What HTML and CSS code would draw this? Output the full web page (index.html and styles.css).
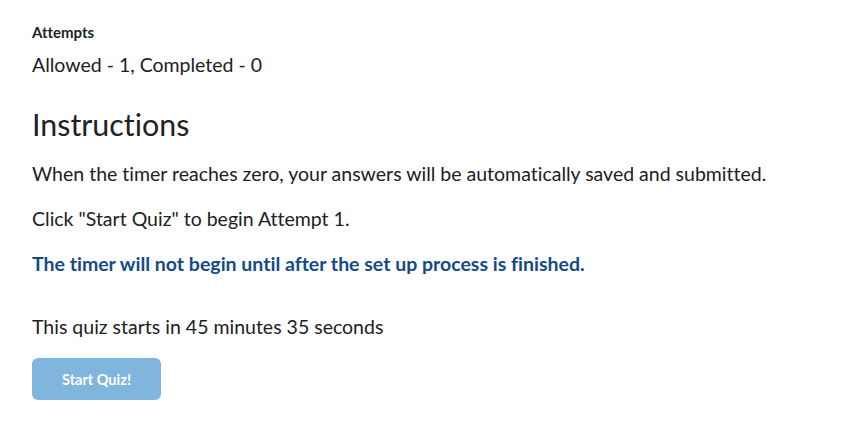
FILE: index.html
```html
<!DOCTYPE html>
<html>
<head>
<meta charset="utf-8"/>
<title>Quiz Summary</title>
<link rel="stylesheet" href="styles.css">
</head>
<body>
<div class="summary">
  <div class="field">
    <div class="label">Attempts</div>
    <div class="value">Allowed - 1, Completed - 0</div>
  </div>

  <h2 class="heading">Instructions</h2>
  <p>When the timer reaches zero, your answers will be automatically saved and submitted.</p>
  <p>Click "Start Quiz" to begin Attempt 1.</p>
  <p class="notice">The timer will not begin until after the set up process is finished.</p>

  <p class="countdown">This quiz starts in 45 minutes 35 seconds</p>
  <button class="btn-primary" disabled>Start Quiz!</button>
</div>
</body>
</html>
```

FILE: styles.css
```css
body {
   font-family: Lato, "Open Sans", sans-serif;
   font-variant-ligatures: none;
   background-color: white;
   color: #202122;
   margin: 0;
}

.summary {
   padding: 22px 32px;
}

.label {
   font-size: 15px;
   font-weight: bold;
   line-height: 20px;
}

.value {
   font-size: 19.5px;
   line-height: 28px;
   margin-top: 9px;
}

.heading {
   font-size: 30.4px;
   font-weight: normal;
   line-height: 36px;
   margin: 27px 0 17px;
}

p {
   font-size: 19.5px;
   line-height: 29px;
   margin: 0 0 16px;
}

.notice {
   color: #134a87;
   font-weight: bold;
}

.countdown {
   margin-top: 34px;
}

.btn-primary {
   font-family: inherit;
   font-size: 14.5px;
   font-weight: bold;
   font-variant-ligatures: none;
   color: white;
   background-color: #80b5dd;
   border: none;
   border-radius: 6px;
   width: 129px;
   height: 42px;
   margin-top: 1px;
}
```
